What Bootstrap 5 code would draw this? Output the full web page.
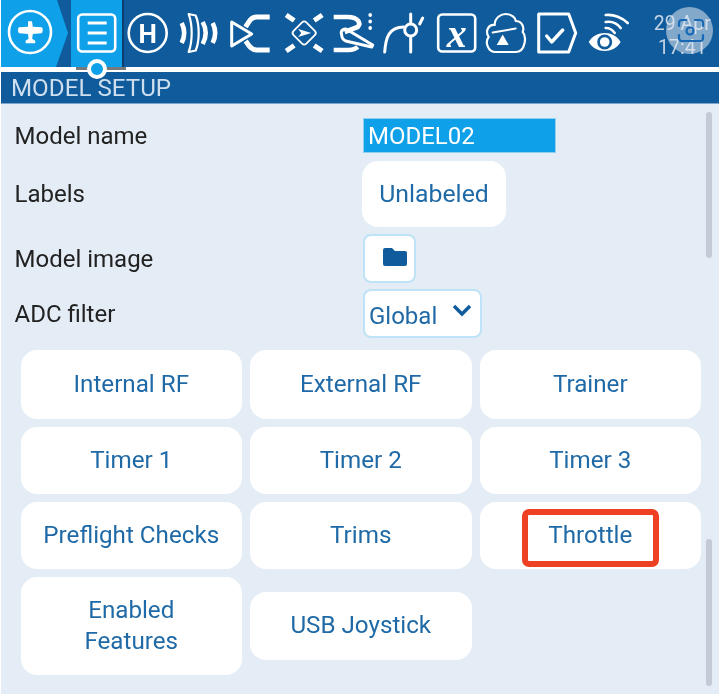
<!doctype html>
<html lang="en">
<head>
<meta charset="utf-8">
<title>Model setup</title>
<link href="https://cdn.jsdelivr.net/npm/bootstrap@5.3.0/dist/css/bootstrap.min.css" rel="stylesheet">
<style>
html,body{margin:0;background:#fff}
body{font-family:Roboto,"Liberation Sans",sans-serif;overflow:hidden}
.scr{width:719px;height:694px;padding-left:1px;position:relative;filter:blur(.55px)}
.topbar{height:67px;background:#0f5b9c;position:relative}
.tab-home{width:70px;height:67px;background:#0ea0e8;clip-path:polygon(0 0,56px 0,67px 33px,55px 67px,0 67px);flex:none}
.tab-on{width:51.4px;height:67px;background:#0ea0e8;box-shadow:2px 0 0 #0b3f6d;flex:none;position:relative;z-index:1}
.tab-i{width:51.4px;height:67px;flex:none}
.topbar svg{display:block}
.ico-s{fill:none;stroke:#fff;stroke-width:2.6;stroke-linecap:round;stroke-linejoin:round}
.ico-b{fill:none;stroke:#fff;stroke-width:5;stroke-linejoin:round}
.ico-f{fill:#fff;stroke:none}
.ico-txt{fill:#fff;font-family:"Liberation Serif",serif;font-weight:700;font-style:italic;font-size:40px}
.ico-h{fill:#fff;font-family:Roboto,sans-serif;font-weight:700;font-size:26px}
.clock{width:60px;margin-left:16px;flex:none;color:#c4d4e4;font-size:19.5px;line-height:24px;text-align:center;padding-top:12px;white-space:nowrap}
.whiteline{height:5px;background:#fff;position:relative}
.shade{position:absolute;left:75px;width:50px;top:0;height:3px;background:#77797c}
.knob{position:absolute;left:86px;top:-8px;width:20px;height:20px;border-radius:50%;background:#0ea0e8;border:4px solid #fff;z-index:2}
.titlebar{height:32px;background:#0f5b9c;border-bottom:1px solid #7fa6c9;color:#cfdfee;font-size:24.2px;line-height:32px;padding-left:10px}
.body-area{height:590px;background:#e4ecf5;position:relative;padding:14px 0 0 13.5px}
.lbl{width:348.500px;flex:none;font-size:24px;color:#222}
.r1{height:35px;margin-bottom:8px}
.r2{height:66px;margin-bottom:7px}
.r3{height:49px;margin-bottom:6px}
.r4{height:49px;margin-bottom:12px}
.fld{width:193px;height:35px;background:#0ea0e8;color:#fff;font-size:24px;line-height:35px;padding-left:4px;border:1px solid #8fd0f2}
.btn.pill{background:#fff;border:0;color:#1f6aa6;font-size:24.2px;line-height:31px;padding:0;border-radius:16px;--bs-btn-hover-bg:#fff}
.btn.lab{width:144px;height:66px;margin-left:-1px;font-size:24.8px;padding-bottom:2px}
.sq{background:#fff;border:2px solid #bfe3f6;border-radius:8px;color:#1f6aa6}
.fold{width:53px;height:49px}
.fold svg{margin:0 0 4px 11px}
.sel{width:119px;height:49px;font-size:24px;padding:0 8px 0 4px}
.sel span{padding-top:5px}
.sel svg{margin-bottom:6px}
.tiles{display:grid;grid-template-columns:221.5px 221.5px 221.5px;grid-template-rows:69px 67.5px 67.5px 98.5px;column-gap:8px;row-gap:7.5px;align-items:center;padding-left:6px}
.tiles .btn.pill{height:100%;width:100%}
.tiles .btn.mid{height:67.5px}
.redbox{position:absolute;left:521px;top:405px;width:137px;height:58px;border:6px solid #ee4023;border-radius:7px}
.thumb{position:absolute;left:705px;width:6px;background:#c3ccd6;border-radius:3px}
.t1{top:8px;height:146px}
.t2{top:435px;height:147px}
.lens{position:absolute;left:665px;top:7px;width:47px;height:47px;border-radius:50%;background:rgba(226,232,240,.55);z-index:3}
</style>
</head>
<body>
<div class="scr">
  <div class="topbar d-flex">
    <div class="tab-home">
      <svg width="60" height="67" viewBox="-29 -32 60 67">
        <circle class="ico-s" r="21"/>
        <path class="ico-f" transform="scale(.8) translate(0 -.5)" d="M-2.500-13h5l1 7 11 .5c2 .3 2 7-.5 7.500l-10.500 1-.8 6 3.800 2.500v3h-12v-3l3.800-2.500-.8-6-10.500-1c-2.500-.5-2.500-7.200-.5-7.500l11-.5z"/>
      </svg>
    </div>
    <div class="tab-on">
      <svg width="51.400" height="67" viewBox="-25.700 -33 51.400 67">
        <rect class="ico-s" x="-18.500" y="-18.500" width="37" height="37" rx="4"/>
        <path class="ico-b" style="stroke-width:3" d="M-9-10H10M-9 0H10M-9 10H10"/>
      </svg>
    </div>
    <div class="tab-i">
      <svg width="51.400" height="67" viewBox="-25.700 -33 51.400 67">
        <circle class="ico-s" r="19"/>
        <text class="ico-h" text-anchor="middle" y="9.500">H</text>
      </svg>
    </div>
    <div class="tab-i">
      <svg width="51.400" height="67" viewBox="-25.700 -33 51.400 67">
        <path class="ico-b" style="stroke-width:4.600" d="M-18-10Q-13 0-18 10M3-11Q9 0 3 11M13-10Q18 0 13 10"/>
        <path class="ico-s" style="stroke-width:2.200" d="M-11-19l7 1.500C0-8 0 8-4 17.500L-11 19C-7 8-7-8-11-19z"/>
      </svg>
    </div>
    <div class="tab-i">
      <svg width="51.400" height="67" viewBox="-25.700 -33 51.400 67">
        <path class="ico-s" style="stroke-width:3" d="M-19-11L1 1-19 13z"/>
        <path class="ico-b" d="M19-16H6C0-16-2-11-5-6M19 17H6C0 17-2 12-5 8"/>
      </svg>
    </div>
    <div class="tab-i">
      <svg width="51.400" height="67" viewBox="-27.200 -33 51.400 67">
        <path class="ico-b" d="M-18-18l8 5.500M18-18l-8 5.500M-18 18l8-5.500M18 18l-8-5.500"/>
        <rect class="ico-s" style="stroke-width:1.800" x="-9" y="-9" width="18" height="18" rx="3" transform="rotate(45)"/>
        <path class="ico-f" d="M-6-4L7 0-6 4-3 0z"/>
      </svg>
    </div>
    <div class="tab-i">
      <svg width="51.400" height="67" viewBox="-25.700 -33 51.400 67">
        <path class="ico-b" style="stroke-width:4.600" d="M-20-16H-6C4-16 8-10 4-6L-9-1M-20 17H-5C-1 17 2 16 4 14"/>
        <path class="ico-s" style="stroke-width:3" d="M-12 2C-14-3-9-5-6-3L19 12 18 14-8 8C-10 7-12 5-12 2z"/>
        <path class="ico-s" style="stroke-width:3.600" d="M16.500-18.200v.4M16.500-11.700v.4M16.500-5.200v.4"/>
      </svg>
    </div>
    <div class="tab-i">
      <svg width="51.400" height="67" viewBox="-25.700 -33 51.400 67">
        <path class="ico-s" style="stroke-width:3" d="M-20 19C-19 5-16-6-1-6M6-19V19M15-9L18-15"/>
        <circle class="ico-s" style="stroke-width:3;fill:#0f5b9c" cx="6" cy="-3" r="6"/>
      </svg>
    </div>
    <div class="tab-i">
      <svg width="51.400" height="67" viewBox="-25.700 -33 51.400 67">
        <rect class="ico-s" x="-18.500" y="-18.500" width="37" height="37" rx="4"/>
        <text class="ico-txt" text-anchor="middle" y="14">x</text>
      </svg>
    </div>
    <div class="tab-i">
      <svg width="51.400" height="67" viewBox="-25.700 -33 51.400 67">
        <path class="ico-s" style="stroke-width:2.200" d="M-12 19C-20 19-23 9-19 4-23-2-19-9-13-8-13-16-6-19-2-19 4-19 8-15 8-12 14-12 17-6 15-1 19 3 18 19 8 19z"/>
        <path class="ico-s" style="stroke-width:2" d="M-15-.5L8-4.500"/>
        <path class="ico-f" d="M-5 1.500L1 12H-11z"/>
      </svg>
    </div>
    <div class="tab-i">
      <svg width="51.400" height="67" viewBox="-25.700 -33 51.400 67">
        <path class="ico-s" style="stroke-width:3" d="M-21-19H9L16 0 9 19H-21z"/>
        <path class="ico-s" style="stroke-width:3.400" d="M-13 3L-8 9 3-3"/>
      </svg>
    </div>
    <div class="tab-i">
      <svg width="51.400" height="67" viewBox="-25.700 -33 51.400 67">
        <path class="ico-f" fill-rule="evenodd" d="M-22 9C-15-3 3-3 10 9 3 21-15 21-22 9zM-6 1.500A7.500 7.500 0 1 0-6 16.500 7.500 7.500 0 0 0-6 1.500z"/>
        <circle class="ico-f" cx="-6" cy="9" r="4.800"/>
        <path class="ico-s" d="M-5-5C-1-5 2-3 4 0M-5-11C2-12 7-9 10-5M-5-18C3-19 12-15 17-10"/>
      </svg>
    </div>
    <div class="clock">29 Apr<br>17:41</div>
    <div class="lens">
      <svg width="47" height="47" viewBox="0 0 47 47">
        <path fill="none" stroke="#1769b6" stroke-width="2.200" stroke-linecap="round" d="M13 19v-3a3 3 0 0 1 3-3h4M29 13h5a3 3 0 0 1 3 3v3M13 28v3a3 3 0 0 0 3 3h18a3 3 0 0 0 3-3v-3"/>
        <circle cx="24" cy="24" r="3.500" fill="none" stroke="#1769b6" stroke-width="2.200"/>
      </svg>
    </div>
  </div>
  <div class="whiteline"><div class="shade"></div><div class="knob"></div></div>
  <div class="titlebar">MODEL SETUP</div>
  <div class="body-area">
    <div class="d-flex align-items-center r1"><div class="lbl">Model name</div><div class="fld">MODEL02</div></div>
    <div class="d-flex align-items-center r2"><div class="lbl">Labels</div><button type="button" class="btn pill lab">Unlabeled</button></div>
    <div class="d-flex align-items-center r3"><div class="lbl">Model image</div>
      <div class="sq fold d-flex align-items-center justify-content-center">
        <svg width="26" height="20" viewBox="0 0 26 20"><path fill="#0f5b9c" d="M1 3a2 2 0 0 1 2-2h7l3 3h10a2 2 0 0 1 2 2v11a2 2 0 0 1-2 2H3a2 2 0 0 1-2-2z"/></svg>
      </div>
    </div>
    <div class="d-flex align-items-center r4"><div class="lbl">ADC filter</div>
      <div class="sq sel d-flex align-items-center justify-content-between">
        <span>Global</span>
        <svg width="20" height="14" viewBox="0 0 20 14"><path fill="none" stroke="#0f5b9c" stroke-width="3.400" d="M2 2l8 8 8-8"/></svg>
      </div>
    </div>
    <div class="tiles">
      <button type="button" class="btn pill">Internal RF</button>
      <button type="button" class="btn pill">External RF</button>
      <button type="button" class="btn pill">Trainer</button>
      <button type="button" class="btn pill">Timer 1</button>
      <button type="button" class="btn pill">Timer 2</button>
      <button type="button" class="btn pill">Timer 3</button>
      <button type="button" class="btn pill">Preflight Checks</button>
      <button type="button" class="btn pill">Trims</button>
      <button type="button" class="btn pill">Throttle</button>
      <button type="button" class="btn pill">Enabled<br>Features</button>
      <button type="button" class="btn pill mid">USB Joystick</button>
    </div>
    <div class="redbox"></div>
    <div class="thumb t1"></div>
    <div class="thumb t2"></div>
  </div>
</div>
<script src="https://cdn.jsdelivr.net/npm/bootstrap@5.3.0/dist/js/bootstrap.bundle.min.js"></script>
</body>
</html>
